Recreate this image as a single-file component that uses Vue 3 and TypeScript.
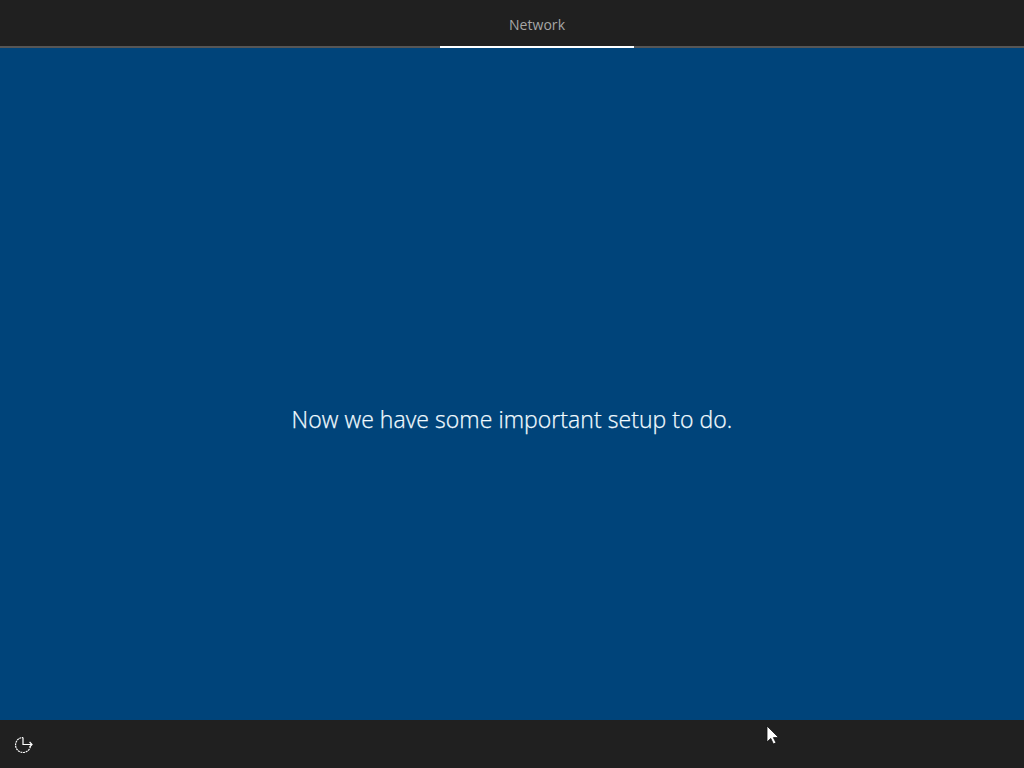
<script setup lang="ts">
const heading: string = 'Now we have some important setup to do.'
</script>

<template>
  <div class="screen">
    <header class="top">
      <div class="tab">Network</div>
    </header>
    <main class="main">
      <h1 class="msg">{{ heading }}</h1>
    </main>
    <footer class="bottom">
      <svg class="access" width="18" height="18" viewBox="0 0 18 18" fill="none" stroke="#fff" stroke-width="1.2">
        <path d="M15.4 10.5A7.5 7.5 0 1 1 8 1.5" stroke-dasharray="2 0.7" />
        <path d="M8 1.5V8.5H17" />
        <path d="M14.6 6L17 8.5L14.6 11" />
      </svg>
      <svg class="cursor" width="14" height="20" viewBox="0 0 14 20">
        <path d="M1 1V17L4.8 13.4L7.4 19L10 17.8L7.4 12.6H12.6Z" fill="#fff" stroke="#111" stroke-width="0.8" />
      </svg>
    </footer>
  </div>
</template>

<style>
html, body { margin: 0; background: #202020; }
</style>

<style scoped>
.screen {
  width: 1024px;
  height: 768px;
  display: flex;
  flex-direction: column;
  overflow: hidden;
  font-family: "Open Sans", "Liberation Sans", sans-serif;
}
.top {
  height: 46px;
  background: #202020;
  border-bottom: 2px solid #565656;
  display: flex;
  padding-left: 440px;
}
.tab {
  width: 194px;
  height: 46px;
  margin-bottom: -2px;
  border-bottom: 2px solid #fff;
  color: #a6a6a6;
  font-size: 14px;
  letter-spacing: 0.05px;
  line-height: 50px;
  text-align: center;
}
.main {
  flex: 1;
  background: #00447a;
  display: flex;
  justify-content: center;
  padding-top: 353px;
  box-sizing: border-box;
}
.msg {
  margin: 0;
  color: #f2fbff;
  font-size: 23px;
  font-weight: 300;
  letter-spacing: 0.05px;
  -webkit-text-stroke: 0.25px #f2fbff;
  line-height: 36px;
  white-space: nowrap;
}
.bottom {
  height: 48px;
  background: #202020;
  display: flex;
  align-items: center;
  padding-left: 15px;
  position: relative;
}
.access { margin-top: 2px; }
.cursor {
  position: absolute;
  left: 766px;
  top: 5px;
}
</style>
